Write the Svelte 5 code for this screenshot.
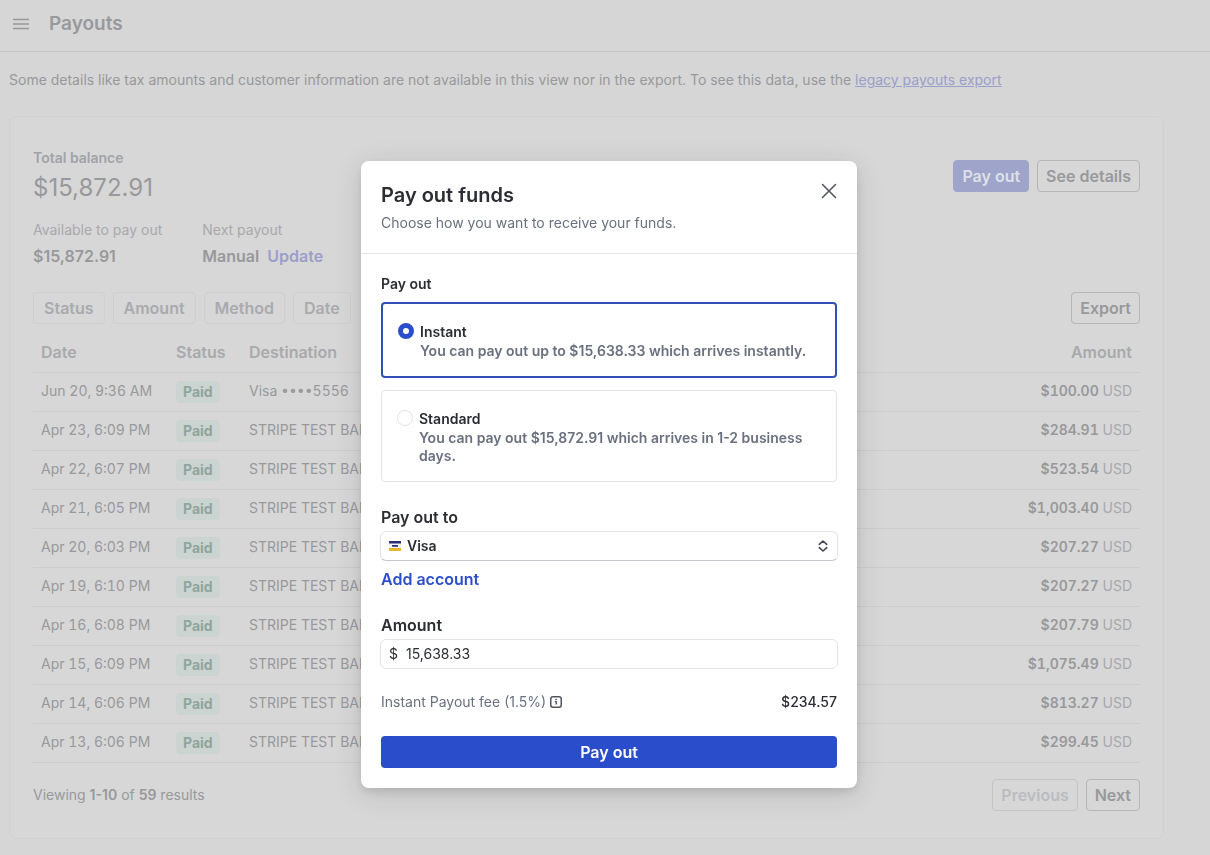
<script>
	const filters = ["Status", "Amount", "Method", "Date"];

	const payouts = [
		{ date: "Jun 20, 9:36 AM", destination: "Visa ••••5556", amount: "$100.00" },
		{ date: "Apr 23, 6:09 PM", destination: "STRIPE TEST BANK", amount: "$284.91" },
		{ date: "Apr 22, 6:07 PM", destination: "STRIPE TEST BANK", amount: "$523.54" },
		{ date: "Apr 21, 6:05 PM", destination: "STRIPE TEST BANK", amount: "$1,003.40" },
		{ date: "Apr 20, 6:03 PM", destination: "STRIPE TEST BANK", amount: "$207.27" },
		{ date: "Apr 19, 6:10 PM", destination: "STRIPE TEST BANK", amount: "$207.27" },
		{ date: "Apr 16, 6:08 PM", destination: "STRIPE TEST BANK", amount: "$207.79" },
		{ date: "Apr 15, 6:09 PM", destination: "STRIPE TEST BANK", amount: "$1,075.49" },
		{ date: "Apr 14, 6:06 PM", destination: "STRIPE TEST BANK", amount: "$813.27" },
		{ date: "Apr 13, 6:06 PM", destination: "STRIPE TEST BANK", amount: "$299.45" }
	];

	const speeds = [
		{
			value: "instant",
			name: "Instant",
			text: "You can pay out up to $15,638.33 which arrives instantly."
		},
		{
			value: "standard",
			name: "Standard",
			text: "You can pay out $15,872.91 which arrives in 1-2 business days."
		}
	];

	let speed = $state("instant");
	let account = $state("visa");
	let amount = $state("15,638.33");
	let open = $state(true);
</script>

<div class="page">
	<header class="topbar">
		<button type="button" class="icon-btn" aria-label="Menu">
			<svg width="16" height="12" viewBox="0 0 16 12" fill="none" stroke="currentColor" stroke-width="1.7">
				<path d="M0 1.5h16M0 6h16M0 10.5h16" />
			</svg>
		</button>
		<h1>Payouts</h1>
	</header>

	<main>
		<p class="notice">
			Some details like tax amounts and customer information are not available in this view nor in the export. To see this data, use the
			<a href="#legacy">legacy payouts export</a>
		</p>

		<section class="card">
			<div class="summary">
				<div>
					<div class="total-label">Total balance</div>
					<div class="total">$15,872.91</div>
					<div class="stats">
						<div>
							<div class="stat-label">Available to pay out</div>
							<div class="stat">$15,872.91</div>
						</div>
						<div>
							<div class="stat-label">Next payout</div>
							<div class="stat">Manual <a href="#update">Update</a></div>
						</div>
					</div>
				</div>
				<div class="actions">
					<button type="button" class="btn btn-accent" onclick={() => (open = true)}>Pay out</button>
					<button type="button" class="btn">See details</button>
				</div>
			</div>

			<div class="toolbar">
				<div class="filters">
					{#each filters as filter}
						<button type="button" class="btn btn-filter">{filter}</button>
					{/each}
				</div>
				<button type="button" class="btn">Export</button>
			</div>

			<table>
				<thead>
					<tr>
						<th class="col-date">Date</th>
						<th class="col-status">Status</th>
						<th>Destination</th>
						<th class="col-amount">Amount</th>
					</tr>
				</thead>
				<tbody>
					{#each payouts as payout}
						<tr>
							<td>{payout.date}</td>
							<td class="col-status"><span class="badge">Paid</span></td>
							<td>{payout.destination}</td>
							<td class="col-amount"><b>{payout.amount}</b> <span>USD</span></td>
						</tr>
					{/each}
				</tbody>
			</table>

			<div class="pager">
				<div>Viewing <b>1-10</b> of <b>59</b> results</div>
				<div class="actions">
					<button type="button" class="btn" disabled>Previous</button>
					<button type="button" class="btn">Next</button>
				</div>
			</div>
		</section>
	</main>
</div>

{#if open}
	<div class="overlay">
		<div class="modal" role="dialog" aria-modal="true" aria-labelledby="modal-title">
			<div class="modal-header">
				<div>
					<h2 id="modal-title">Pay out funds</h2>
					<p>Choose how you want to receive your funds.</p>
				</div>
				<button type="button" class="icon-btn close" aria-label="Close" onclick={() => (open = false)}>
					<svg width="16" height="16" viewBox="0 0 16 16" fill="none" stroke="currentColor" stroke-width="1.5" stroke-linecap="round">
						<path d="M1.5 1.5l13 13M14.5 1.5l-13 13" />
					</svg>
				</button>
			</div>

			<form class="modal-body" onsubmit={(e) => e.preventDefault()}>
				<fieldset>
					<legend>Pay out</legend>
					{#each speeds as option}
						<label class="option" class:selected={speed === option.value}>
							<input type="radio" name="speed" value={option.value} bind:group={speed} />
							<span>
								<span class="option-name">{option.name}</span>
								<span class="option-text">{option.text}</span>
							</span>
						</label>
					{/each}
				</fieldset>

				<label class="field-label" for="account">Pay out to</label>
				<div class="field field-select">
					<svg width="12" height="10" viewBox="0 0 12 10">
						<rect width="12" height="10" fill="#f2f3f8" />
						<rect width="12" height="2.5" fill="#292f78" />
						<rect x="3" y="4" width="6" height="1.8" rx="0.6" fill="#292f78" />
						<rect y="7" width="12" height="3" fill="#eab530" />
					</svg>
					<select id="account" bind:value={account}>
						<option value="visa">Visa</option>
					</select>
					<svg width="10" height="12" viewBox="0 0 10 12" fill="none" stroke="#414552" stroke-width="1.6" stroke-linecap="round" stroke-linejoin="round">
						<path d="M1.3 4.3L5 1l3.7 3.3M1.3 7.7L5 11l3.7-3.3" />
					</svg>
				</div>
				<a class="add" href="#add-account">Add account</a>

				<label class="field-label" for="amount">Amount</label>
				<div class="field">
					<span>$</span>
					<input id="amount" type="text" bind:value={amount} />
				</div>

				<div class="fee">
					<span>Instant Payout fee (1.5%)</span>
					<svg width="12" height="12" viewBox="0 0 12 12" fill="none" stroke="#50545f">
						<rect x="0.75" y="0.75" width="10.5" height="10.5" rx="2.2" stroke-width="1.5" />
						<path d="M4.8 5.6h1.4v3" stroke-width="1.3" />
						<path d="M5.3 3.5h1.5" stroke-width="1.5" />
					</svg>
					<span class="fee-value">$234.57</span>
				</div>

				<button type="submit" class="submit">Pay out</button>
			</form>
		</div>
	</div>
{/if}

<style>
	:global(body) {
		margin: 0;
		background: #d6d6d6;
		font-family: Inter, "Liberation Sans", sans-serif;
		font-size: 14px;
		line-height: 20px;
	}

	button,
	input,
	select {
		font: inherit;
		color: inherit;
	}

	h1,
	h2,
	p {
		margin: 0;
	}

	b {
		font-weight: 600;
	}

	.icon-btn {
		display: flex;
		padding: 0;
		border: none;
		background: none;
		cursor: pointer;
	}

	.page {
		color: #98999c;
	}

	.topbar {
		display: flex;
		align-items: center;
		gap: 20px;
		height: 47px;
		padding: 0 13px 4px;
		border-bottom: 1px solid #c4c5ca;
	}

	h1 {
		font-size: 19px;
		line-height: 24px;
		font-weight: 600;
	}

	main {
		padding: 18px 46px 16px 9px;
	}

	.notice {
		margin-bottom: 26px;
	}

	.page a {
		color: #9a9fc9;
	}

	.card {
		padding: 31px 23px 27px;
		border: 1px solid #d1d1d2;
		border-radius: 8px;
		background: #d7d7d7;
	}

	.summary,
	.toolbar,
	.pager {
		display: flex;
		justify-content: space-between;
	}

	.total-label {
		color: #a2a3a7;
		font-weight: 600;
	}

	.total {
		margin: 4px 0 16px;
		font-size: 24px;
		line-height: 32px;
	}

	.stats {
		display: flex;
		gap: 40px;
	}

	.stat-label {
		color: #a8a9ad;
	}

	.stat {
		margin-top: 4px;
		font-size: 16px;
		line-height: 24px;
		font-weight: 600;
	}

	.stat a {
		margin-left: 4px;
		text-decoration: none;
	}

	.actions,
	.filters {
		display: flex;
		gap: 8px;
	}

	.summary .actions {
		margin-top: 12px;
	}

	.btn {
		height: 32px;
		padding: 0 8px;
		border: 1px solid #b4b5b9;
		border-radius: 4px;
		background: none;
		font-size: 16px;
		font-weight: 600;
		cursor: pointer;
	}

	.btn-accent {
		border-color: #9ea4ca;
		background: #9ea4ca;
		color: #dfe0e8;
	}

	.btn-filter {
		padding: 0 10px;
		border-color: #cfcfd1;
		color: #a9aaae;
	}

	.btn:disabled {
		border-color: #c4c4c8;
		color: #bbbcc0;
		cursor: default;
	}

	.toolbar {
		margin: 24px 0 8px;
	}

	table {
		width: 100%;
		border-collapse: collapse;
		table-layout: fixed;
		font-variant-numeric: tabular-nums;
	}

	th,
	td {
		box-sizing: border-box;
		height: 39px;
		padding: 0 8px 2px;
		border-bottom: 1px solid #cdcdce;
		text-align: left;
	}

	th {
		height: 40px;
		padding-bottom: 0;
		color: #a8a9ad;
		font-size: 16px;
		font-weight: 600;
	}

	.col-date {
		width: 135px;
	}

	.col-status {
		width: 73px;
		padding-bottom: 0;
	}

	.col-amount {
		text-align: right;
	}

	.col-amount span {
		color: #a8a9ad;
	}

	.badge {
		display: inline-block;
		padding: 0 6px;
		border: 1px solid #cbd4d2;
		border-radius: 4px;
		background: #ccd4d2;
		color: #8ea69f;
		font-weight: 700;
	}

	.pager {
		align-items: center;
		margin-top: 16px;
	}

	.overlay {
		position: fixed;
		inset: 0;
		display: flex;
		justify-content: center;
		align-items: flex-start;
		padding: 161px 0 20px 8px;
		overflow: auto;
	}

	.modal {
		width: 100%;
		max-width: 496px;
		border-radius: 8px;
		background: #fff;
		color: #2b2d33;
		box-shadow: 0 6px 28px rgba(40, 42, 60, 0.14), 0 4px 10px rgba(0, 0, 0, 0.1);
	}

	.modal-header {
		display: flex;
		justify-content: space-between;
		align-items: flex-start;
		padding: 20px;
		border-bottom: 1px solid #e3e4e7;
	}

	h2 {
		font-size: 20px;
		line-height: 28px;
		font-weight: 600;
	}

	.modal-header p {
		margin-top: 4px;
		color: #6a7080;
	}

	.close {
		margin-top: 2px;
		color: #50545f;
	}

	.modal-body {
		padding: 20px;
	}

	fieldset {
		display: flex;
		flex-direction: column;
		gap: 12px;
		margin: 0;
		padding: 0;
		border: none;
		min-width: 0;
	}

	legend {
		padding: 0;
		margin-bottom: 8px;
		font-weight: 600;
	}

	.option {
		display: flex;
		gap: 6px;
		padding: 18px 15px 16px;
		border: 1px solid #e3e4e8;
		border-radius: 4px;
		cursor: pointer;
	}

	.option.selected {
		border: 2px solid #3050b4;
	}

	.option input {
		appearance: none;
		flex: none;
		width: 16px;
		height: 16px;
		margin: 1px 0 0;
		border: 1px solid #e3e4e8;
		border-radius: 50%;
		background: #fff;
	}

	.option input:checked {
		border: 5px solid #2a4ecb;
	}

	.option-name,
	.option-text {
		display: block;
		font-weight: 600;
	}

	.option-text {
		color: #6a7080;
		line-height: 18px;
	}

	.field-label {
		display: block;
		margin: 24px 0 3px;
		font-size: 16px;
		line-height: 22px;
		font-weight: 600;
	}

	.field {
		display: flex;
		align-items: center;
		gap: 8px;
		height: 28px;
		margin: 0 -1px;
		padding: 0 8px;
		border: 1px solid #e3e4e8;
		border-radius: 6px;
	}

	.field-select {
		gap: 6px;
		padding-right: 9px;
		border-bottom-color: #c6c7cd;
	}

	.field input,
	.field select {
		appearance: none;
		flex: 1;
		min-width: 0;
		padding: 0;
		border: none;
		outline: none;
		background: none;
	}

	.field select {
		font-weight: 600;
	}

	.add {
		display: block;
		margin-top: 7px;
		color: #2a4ecb;
		font-size: 16px;
		line-height: 22px;
		font-weight: 600;
		text-decoration: none;
	}

	.fee {
		display: flex;
		align-items: center;
		gap: 4px;
		margin: 23px 0 24px;
		color: #6a7080;
	}

	.fee-value {
		margin-left: auto;
		color: #2b2d33;
		font-weight: 500;
	}

	.submit {
		width: 100%;
		height: 32px;
		border: none;
		border-radius: 4px;
		background: #2a4ecb;
		color: #fff;
		font-size: 16px;
		font-weight: 600;
		cursor: pointer;
	}
</style>
